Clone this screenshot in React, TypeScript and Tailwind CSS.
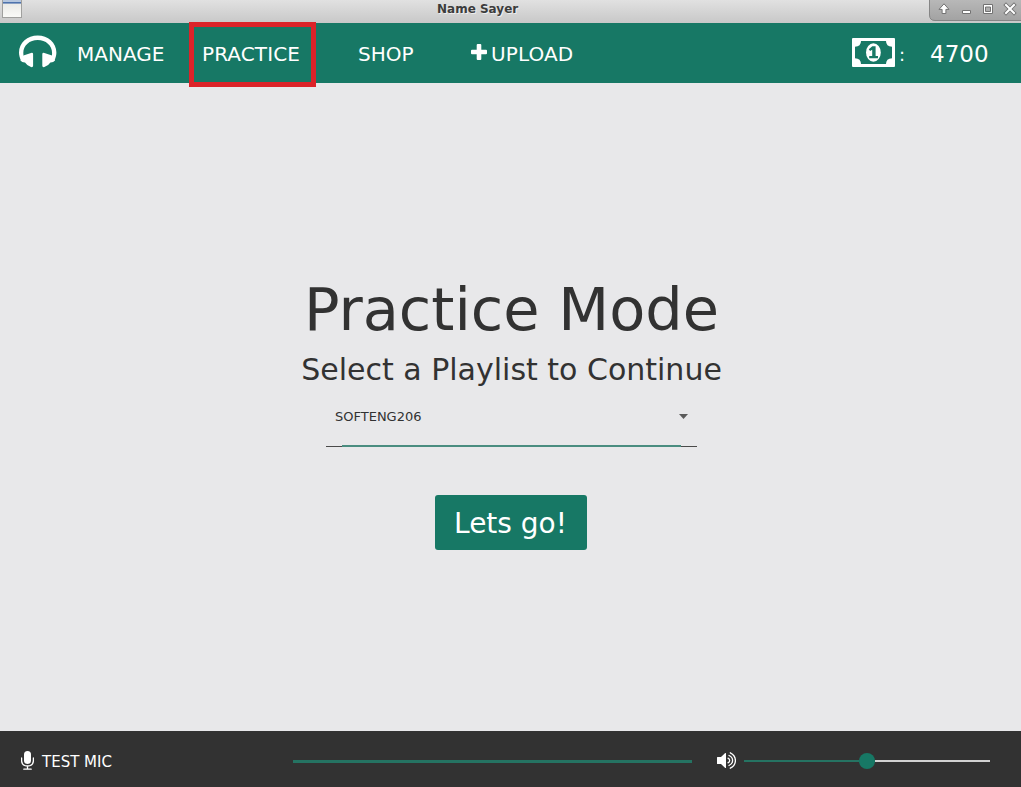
import React from "react";

function TitleBar() {
  return (
    <div className="flex h-[23px] shrink-0 items-start bg-linear-to-b from-[#e1e1e1] to-[#c8c8c8]">
      <svg className="h-[19px] w-[92px]" viewBox="0 0 92 19">
        <defs>
          <linearGradient id="win" x1="0" y1="0" x2="0" y2="1">
            <stop offset="0" stopColor="#e4e4e0" />
            <stop offset="1" stopColor="#fafaf8" />
          </linearGradient>
        </defs>
        <rect x="2.5" y="-2" width="19" height="19.5" fill="url(#win)" stroke="#a0a09e" />
        <rect x="3" y="0" width="18" height="2" fill="#b5c6de" />
        <rect x="3" y="2" width="18" height="1.6" fill="#4e73ad" />
      </svg>
      <div className="flex-1 pl-[345px] text-[12px] leading-[18px] font-bold text-[#3c3c3c] [text-shadow:1px_1px_0_#eeeeee]">
        Name Sayer
      </div>
      <svg className="h-[22px] w-[92px]" viewBox="0 0 92 22">
        <defs>
          <linearGradient id="ctl" x1="0" y1="0" x2="0" y2="1">
            <stop offset="0" stopColor="#b9b9b9" />
            <stop offset="1" stopColor="#a2a2a2" />
          </linearGradient>
        </defs>
        <path d="M.5 -1V15Q.5 20.5 6 20.5H93V-1Z" fill="url(#ctl)" stroke="#858585" />
        <g stroke="#727272" strokeWidth="1" fill="#fff" strokeLinejoin="round">
          <path d="M15 3.8L20 9.4H16.9V13.5H13.1V9.4H10Z" />
          <path d="M33.5 10.5H41.5V13.5H33.5Z" />
          <path fillRule="evenodd" d="M54.5 4.5H63.5V13.5H54.5ZM56.5 7V11.5H61.5V7Z" />
        </g>
        <path d="M77 5L85 13M85 5L77 13" stroke="#727272" strokeWidth="3.8" strokeLinecap="square" />
        <path d="M77 5L85 13M85 5L77 13" stroke="#fff" strokeWidth="2" strokeLinecap="square" />
      </svg>
    </div>
  );
}

function Headphones() {
  return (
    <svg className="mb-[2px] h-[34px] w-[38px]" viewBox="0 0 38 34" fill="#fff">
      <path d="M2.2 26C.7 23 0 20.2 0 17.6C0 7.8 8.5 .6 18.7 .6S37.4 7.8 37.4 17.6C37.4 20.2 36.7 23 35.2 26L32.2 23.5C32.8 21.5 33.1 19.8 33.1 17.9C33.1 10.3 26.7 4.9 18.7 4.9S4.3 10.3 4.3 17.9C4.3 19.8 4.6 21.5 5.2 23.5Z" />
      <path d="M1.4 25.5L4.4 20.6L12 18Q14.1 17.4 14.1 19.3V30.8Q14.1 32.6 12 32.1Q8.5 31.2 6 27.5Q3 27.6 1.4 25.5Z" />
      <path d="M36 25.5L33 20.6L25.4 18Q23.3 17.4 23.3 19.3V30.8Q23.3 32.6 25.4 32.1Q28.9 31.2 31.4 27.5Q34.4 27.6 36 25.5Z" />
    </svg>
  );
}

function Money() {
  return (
    <svg className="mb-[1px] h-[29px] w-[43px]" viewBox="0 0 43 29">
      <rect width="43" height="29" rx="1" fill="#fff" />
      <path d="M9 3H34Q34 8.5 40 8.8V20.2Q34 20.5 34 26H9Q9 20.5 3 20.2V8.8Q9 8.5 9 3Z" fill="#177865" />
      <ellipse cx="21.4" cy="14.5" rx="7.4" ry="9.2" fill="#fff" />
      <path d="M20.3 8.2H23.6V18H26V20.3H17.2V18H20.2V11.8L18.1 13L16.8 11.2Z" fill="#177865" />
    </svg>
  );
}

function Header() {
  return (
    <header className="relative flex h-[60px] shrink-0 items-center bg-[#177865] pl-[19px] text-[20px] leading-[24px] text-white">
      <Headphones />
      <span className="ml-[20px] w-[125px] pt-[2px]">MANAGE</span>
      <span className="w-[156px] pt-[2px] tracking-[0.1px]">PRACTICE</span>
      <span className="w-[113px] pt-[2px]">SHOP</span>
      <svg className="mb-[3px] h-[16px] w-[16px]" viewBox="0 0 16 16" fill="#fff">
        <path d="M6.7 0H9.3Q10.3 0 10.3 1V5.7H15Q16 5.7 16 6.7V9.3Q16 10.3 15 10.3H10.3V15Q10.3 16 9.3 16H6.7Q5.7 16 5.7 15V10.3H1Q0 10.3 0 9.3V6.7Q0 5.7 1 5.7H5.7V1Q5.7 0 6.7 0Z" />
      </svg>
      <span className="ml-[4px] flex-1 pt-[2px] tracking-[0.1px]">UPLOAD</span>
      <Money />
      <span className="ml-[4px] w-[31px] pt-[3px] text-[18px]">:</span>
      <span className="w-[91px] pt-[2px] text-[23px]">4700</span>
      <div className="absolute top-[-1px] left-[189px] h-[65px] w-[127px] border-5 border-[#dc2329]" />
    </header>
  );
}

function Content() {
  return (
    <main className="flex flex-1 flex-col items-center bg-[#e8e8ea] pt-[192px] pl-[2px] text-[#323232]">
      <h1 className="text-[59px] leading-[70px]">Practice Mode</h1>
      <h2 className="mt-[7px] text-[30px] leading-[36px]">Select a Playlist to Continue</h2>
      <div className="mt-[18px] flex h-[59px] w-[371px] flex-col">
        <div className="flex h-[22px] items-center justify-between pr-[9px] pl-[9px]">
          <span className="text-[13px]">SOFTENG206</span>
          <svg className="mb-px h-[5px] w-[9px]" viewBox="0 0 9 5" fill="#5a5a5a">
            <path d="M0 0H9L4.5 5Z" />
          </svg>
        </div>
        <div className="mt-[17px] flex h-[2px] items-end">
          <div className="h-px w-[16px] bg-[#4a4a4a]" />
          <div className="h-[2px] flex-1 bg-[#4a8d80]" />
          <div className="h-px w-[16px] bg-[#4a4a4a]" />
        </div>
      </div>
      <button className="mt-[30px] mr-[2px] h-[55px] w-[152px] rounded-[3px] bg-[#177865] pt-[2px] text-[28px] text-white">
        Lets go!
      </button>
    </main>
  );
}

function Footer() {
  return (
    <footer className="flex h-[56px] shrink-0 items-center bg-[#323232] pt-[4px] pl-[21px] text-white">
      <svg className="mb-[2px] h-[19px] w-[13px]" viewBox="0 0 13 19">
        <rect x="3" y="0" width="7" height="13" rx="3.5" fill="#fff" />
        <path d="M.6 7V9.3C.6 12.8 3 15 6.5 15S12.4 12.8 12.4 9.3V7M6.5 15V18M2.8 18.2H10.2" fill="none" stroke="#fff" strokeWidth="1.3" strokeLinecap="round" />
      </svg>
      <span className="ml-[8px] w-[251px] pt-[2px] text-[15px]">TEST MIC</span>
      <div className="h-[3px] w-[399px] bg-[#257362]" />
      <svg className="mb-[1px] ml-[25px] h-[17px] w-[19px]" viewBox="0 0 19 17">
        <path d="M.5 5H4L8.2 1Q9 .6 9 1.5V15.5Q9 16.4 8.2 16L4 12H.5Q0 12 0 11.5V5.5Q0 5 .5 5Z" fill="#fff" />
        <path d="M11 6.2Q12.7 7 12.7 8.5T11 10.8M12 3.5Q15.6 5.2 15.6 8.5T12 13.5M13.3 .8Q18.4 3.4 18.4 8.5T13.3 16.2" fill="none" stroke="#fff" strokeWidth="1.3" strokeLinecap="round" />
      </svg>
      <div className="ml-[8px] flex h-[16px] w-[246px] items-center">
        <div className="h-[2px] w-[115px] bg-[#257362]" />
        <div className="h-[16px] w-[16px] rounded-full bg-[#177865]" />
        <div className="h-[2px] flex-1 bg-[#d2d2d2]" />
      </div>
    </footer>
  );
}

export default function App() {
  return (
    <div className="flex h-[787px] w-[1021px] flex-col overflow-hidden font-['DejaVu_Sans',sans-serif]">
      <TitleBar />
      <Header />
      <Content />
      <Footer />
    </div>
  );
}
